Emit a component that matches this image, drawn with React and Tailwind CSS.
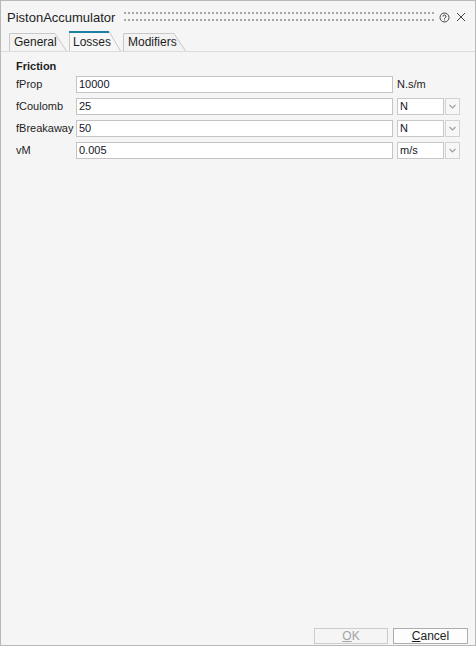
import React from 'react';

const rows = [
  { label: 'fProp', value: '10000', unit: 'N.s/m', select: false },
  { label: 'fCoulomb', value: '25', unit: 'N', select: true },
  { label: 'fBreakaway', value: '50', unit: 'N', select: true },
  { label: 'vM', value: '0.005', unit: 'm/s', select: true },
];

const tabs = [
  { name: 'General', w: 58, active: false },
  { name: 'Losses', w: 52, active: true },
  { name: 'Modifiers', w: 63, active: false },
];

function Tab({ name, w, active }) {
  const h = active ? 20 : 18;
  return (
    <div
      className={`relative flex items-end ${active ? 'h-[20px] pl-[4px]' : 'h-[18px] pl-[5px]'}`}
      style={{ width: w }}
    >
      <svg className="absolute inset-0" width={w} height={h}>
        <path
          d={`M0.5 ${h} L0.5 0.5 L${w - 12} 0.5 L${w - 0.5} ${h}`}
          fill={active ? '#f7f7f7' : '#f3f3f3'}
          stroke="#c8c8c8"
        />
        {active && <rect x="0" y="0" width={w - 12} height="2" fill="#1b7fa6" />}
      </svg>
      <span className="relative pb-[1px] text-[12px] leading-[15px] text-[#1e1e1e]">{name}</span>
    </div>
  );
}

function Grip() {
  return (
    <svg width="310" height="10" className="shrink-0 mt-[1px]">
      <defs>
        <pattern id="dots" width="4" height="7" patternUnits="userSpaceOnUse">
          <rect x="0" y="0" width="2" height="2" fill="#a6a6a6" />
        </pattern>
      </defs>
      <rect x="0" y="0" width="310" height="10" fill="url(#dots)" />
    </svg>
  );
}

export default function App() {
  return (
    <div
      className="w-[476px] h-[646px] flex flex-col bg-[#f5f5f5] border border-[#b9b9b9] text-[#1e1e1e]"
      style={{ fontFamily: '"Liberation Sans", Arial, sans-serif' }}
    >
      {/* Title bar */}
      <div className="h-[30px] flex items-center pl-[6px] pr-[9px]">
        <span className="text-[13px] leading-none text-[#222] w-[117px] mt-[2px]">PistonAccumulator</span>
        <Grip />
        <div className="ml-auto flex items-center gap-[6px] mt-[2px]">
          <svg width="11" height="11" viewBox="0 0 11 11">
            <circle cx="5.5" cy="5.5" r="4.5" fill="none" stroke="#444" strokeWidth="1" />
            <path d="M4 4.5 a1.5 1.5 0 1 1 2.2 1.3 c-0.5 0.3 -0.7 0.5 -0.7 1" fill="none" stroke="#444" strokeWidth="1" />
            <rect x="5" y="7.4" width="1" height="1" fill="#444" />
          </svg>
          <svg width="10" height="10" viewBox="0 0 10 10">
            <path d="M1 1 L9 9 M9 1 L1 9" stroke="#444" strokeWidth="1" />
          </svg>
        </div>
      </div>

      {/* Tabs */}
      <div className="h-[21px] flex items-end gap-[2px] pl-[8px] border-b border-[#dcdcdc]">
        {tabs.map((t) => (
          <Tab key={t.name} {...t} />
        ))}
      </div>

      {/* Friction group */}
      <div className="pl-[15px] pr-[15px] pt-[8px]">
        <div className="text-[11px] leading-[13px] font-bold text-[#1e1e1e]">Friction</div>
        <div className="mt-[3px] flex flex-col gap-[5px]">
          {rows.map((r) => (
            <div key={r.label} className="h-[17px] flex items-center text-[11px]">
              <span className="w-[60px] shrink-0">{r.label}</span>
              <div className="w-[317px] h-[17px] flex items-center bg-white border border-[#c4c4c4] pl-[2px] text-[#141428]">
                {r.value}
              </div>
              {r.select ? (
                <div className="ml-[4px] flex gap-[1px]">
                  <div className="w-[47px] h-[17px] flex items-center bg-white border border-[#c8c8c8] pl-[2px] text-[#141428]">
                    {r.unit}
                  </div>
                  <div className="w-[15px] h-[17px] flex items-center justify-center bg-[#f7f7f7] border border-[#d2d2d2]">
                    <svg width="7" height="5" viewBox="0 0 7 5">
                      <path d="M0.5 1 L3.5 4 L6.5 1" fill="none" stroke="#a0a0a0" strokeWidth="1.2" />
                    </svg>
                  </div>
                </div>
              ) : (
                <span className="ml-[4px]">{r.unit}</span>
              )}
            </div>
          ))}
        </div>
      </div>

      {/* Footer */}
      <div className="mt-auto flex justify-end gap-[5px] pr-[7px] pb-[1px]">
        <button className="w-[74px] h-[16px] flex items-center justify-center border border-[#cccccc] bg-[#f5f5f5] text-[12px] text-[#a3a3a3]">
          <span className="underline">O</span>K
        </button>
        <button className="w-[75px] h-[16px] flex items-center justify-center border border-[#adadad] bg-[#fdfdfd] text-[12px] text-[#1e1e1e]">
          <span className="underline">C</span>ancel
        </button>
      </div>
    </div>
  );
}
